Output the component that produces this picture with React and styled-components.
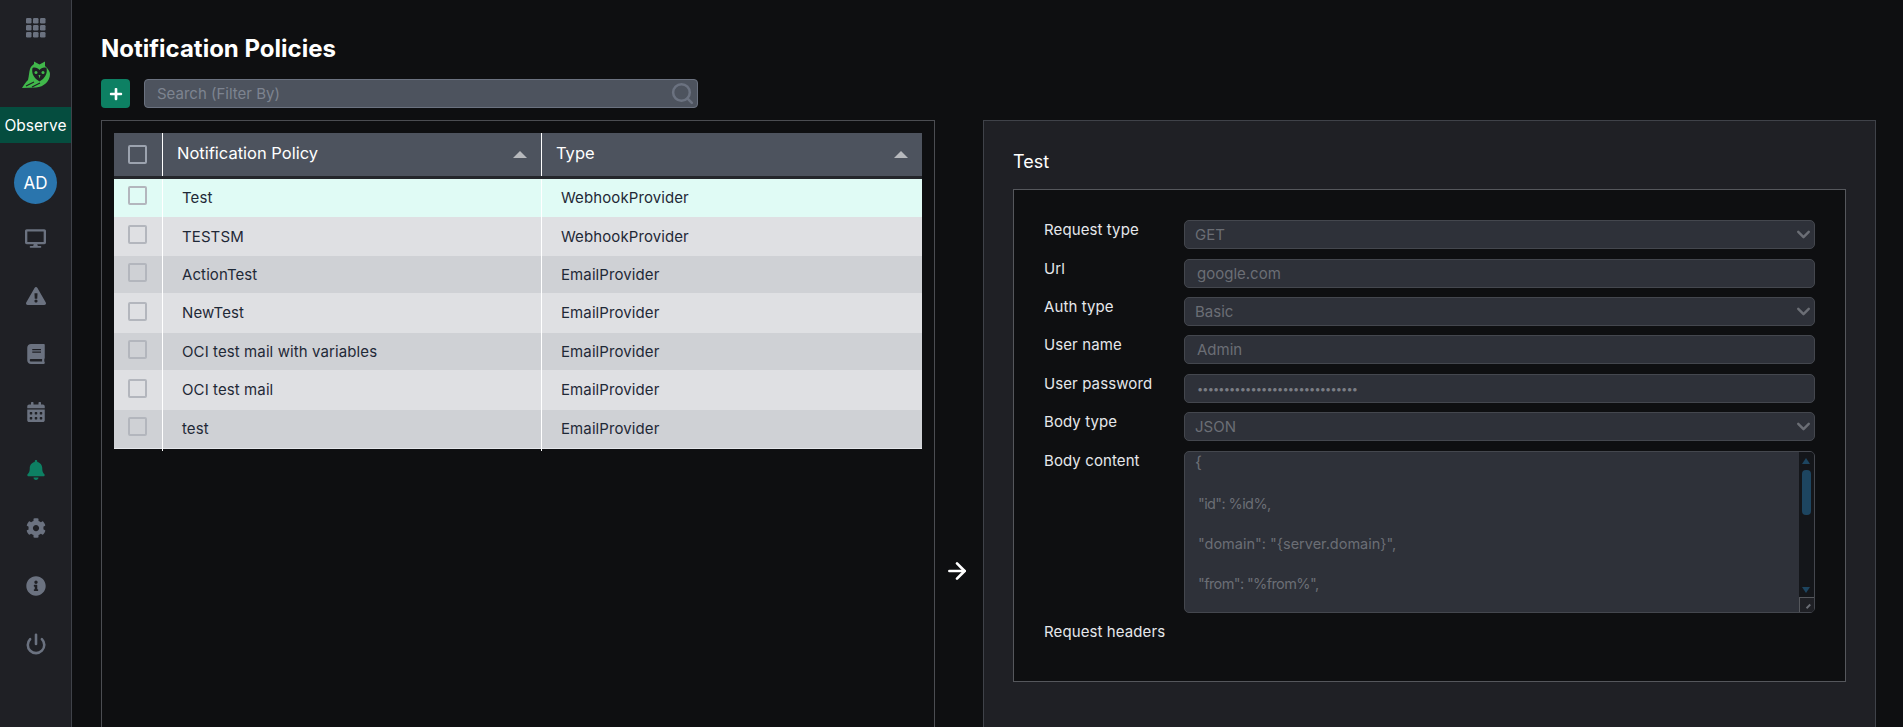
import React from "react";
import styled, { createGlobalStyle } from "styled-components";
import {
  FaDesktop,
  FaExclamationTriangle,
  FaBook,
  FaCalendarAlt,
  FaBell,
  FaCog,
  FaInfoCircle,
  FaPlus,
} from "react-icons/fa";
import { LuChevronDown, LuPower, LuSearch, LuArrowRight } from "react-icons/lu";

const GlobalStyle = createGlobalStyle`
  html, body {
    margin: 0;
    height: 100%;
    overflow: hidden;
    background: #0e0f11;
    font-family: Inter, "Liberation Sans", sans-serif;
  }
  * { box-sizing: border-box; }
`;

const Shell = styled.div`
  display: flex;
  height: 727px;
  overflow: hidden;
`;

const Sidebar = styled.nav`
  width: 72px;
  flex: none;
  background: #1f2025;
  border-right: 1px solid #3f4249;
  display: flex;
  flex-direction: column;
`;

const GridIcon = styled.svg`
  display: block;
  flex: none;
  width: 20px;
  height: 20px;
  margin: 18px 0 0 26px;
`;

const Logo = styled.svg`
  display: block;
  flex: none;
  width: 28px;
  height: 27px;
  margin: 23px 0 0 22px;
`;

const Brand = styled.div`
  margin-top: 19px;
  height: 36px;
  background: #054d3f;
  color: #fff;
  font-size: 15.5px;
  display: flex;
  align-items: center;
  justify-content: center;
`;

const Avatar = styled.div`
  width: 43px;
  height: 43px;
  margin: 18px 0 0 14px;
  border-radius: 50%;
  background: #2a75ad;
  color: #fff;
  font-size: 17px;
  display: flex;
  align-items: center;
  justify-content: center;
`;

const NavList = styled.div`
  margin-top: 5px;
  display: flex;
  flex-direction: column;
`;

const NavItem = styled.div`
  height: 58px;
  display: flex;
  align-items: center;
  justify-content: center;
  font-size: ${(p) => p.$size || 20}px;
  color: ${(p) => (p.$active ? "#0d8063" : "#6b7280")};
`;

const Main = styled.main`
  flex: 1;
  min-width: 0;
  padding: 32px 27px 0 29px;
  display: flex;
  flex-direction: column;
`;

const Title = styled.h1`
  margin: 0;
  height: 32px;
  line-height: 34px;
  font-size: 24px;
  font-weight: 700;
  color: #fff;
`;

const Toolbar = styled.div`
  margin-top: 15px;
  display: flex;
  gap: 14px;
`;

const AddButton = styled.button`
  width: 29px;
  height: 29px;
  padding: 0;
  border: none;
  border-radius: 4px;
  background: #0d8063;
  color: #fff;
  font-size: 14px;
  display: flex;
  align-items: center;
  justify-content: center;
`;

const SearchBox = styled.div`
  width: 554px;
  height: 29px;
  padding: 0 2px 0 12px;
  border: 1px solid #6b7280;
  border-radius: 4px;
  background: #4d535e;
  display: flex;
  align-items: center;
  justify-content: space-between;
  color: #7d8490;
  font-size: 15px;
`;

const Columns = styled.div`
  margin-top: 12px;
  flex: 1;
  display: flex;
  min-height: 0;
`;

const ListPanel = styled.section`
  width: 834px;
  flex: none;
  margin-bottom: -20px;
  padding: 12px;
  border: 1px solid #4b4d52;
`;

const Table = styled.div`
  width: 808px;
  display: flex;
  flex-direction: column;
  border-bottom: 1px solid #e5e7eb;
`;

const Row = styled.div`
  display: grid;
  grid-template-columns: 49px 379px 1fr;
  height: ${(p) => p.$height}px;
  background: ${(p) => p.$bg};
  color: #1f2937;
  font-size: 15px;
  letter-spacing: 0.1px;
`;

const HeadRow = styled(Row)`
  height: 46px;
  color: #fff;
  font-size: 16.5px;
  letter-spacing: 0;
  border-bottom: 3px solid #24262b;
`;

const Cell = styled.div`
  position: relative;
  padding: 0 0 ${(p) => p.$bottom || 1}px ${(p) => p.$pad || 19}px;
  border-right: ${(p) => (p.$last ? "none" : "1px solid #fff")};
  display: flex;
  align-items: center;
  justify-content: space-between;
  ${(p) =>
    p.$tail &&
    `&::after {
      content: "";
      position: absolute;
      right: -1px;
      bottom: -3px;
      width: 1px;
      height: 3px;
      background: #fff;
    }`}
`;

const BoxCell = styled(Cell)`
  padding: 0 0 0 14px;
  align-items: ${(p) => (p.$head ? "center" : "flex-start")};
  justify-content: flex-start;
`;

const Check = styled.span`
  display: block;
  width: 19px;
  height: 19px;
  margin-top: ${(p) => p.$top || 0}px;
  border: 2px solid ${(p) => (p.$head ? "#9ca3af" : "#b3b6bd")};
  border-radius: 2px;
`;

const SortArrow = styled.span`
  width: 0;
  height: 0;
  margin: 2px 14px 0 0;
  border-left: 7px solid transparent;
  border-right: 7px solid transparent;
  border-bottom: 7px solid #b7b9bd;
`;

const ArrowGap = styled.div`
  width: 48px;
  flex: none;
  display: flex;
  justify-content: center;
  padding: 438px 4px 0 0;
  color: #fff;
`;

const DetailPanel = styled.section`
  flex: 1;
  margin-bottom: -20px;
  padding: 0 29px;
  background: #1f2025;
  border: 1px solid #3f4249;
`;

const DetailTitle = styled.h2`
  margin: 0;
  height: 68px;
  padding-top: 29px;
  font-size: 18px;
  line-height: 24px;
  font-weight: 400;
  color: #fff;
`;

const FormBox = styled.div`
  height: 493px;
  padding: 30px 30px 0 30px;
  background: #0e0f11;
  border: 1px solid #55575c;
`;

const FormRow = styled.div`
  display: grid;
  grid-template-columns: 140px 1fr;
  margin-bottom: ${(p) => p.$gap ?? 9}px;
`;

const Label = styled.label`
  color: #e5e7eb;
  font-size: 15px;
  letter-spacing: 0.1px;
  line-height: 20px;
`;

const Field = styled.div`
  height: ${(p) => p.$height || 29}px;
  padding: 0 0 0 ${(p) => p.$pad || 10}px;
  background: #2e3139;
  border: 1px solid #44474e;
  border-radius: 5px;
  color: #6b6e75;
  font-size: 15px;
  display: flex;
  align-items: center;
  justify-content: space-between;
  svg {
    flex: none;
  }
`;

const Dots = styled.span`
  font-size: 11px;
  letter-spacing: -0.85px;
  color: #7a7d84;
`;

const BodyBox = styled.div`
  position: relative;
  height: 162px;
  background: #2e3139;
  border: 1px solid #44474e;
  border-radius: 5px;
  overflow: hidden;
  color: #6b6e75;
  font-size: 14.5px;
`;

const BodyLine = styled.div`
  height: 40px;
  line-height: 20px;
  padding-left: 13px;
  letter-spacing: ${(p) => (p.$tight ? "-0.6px" : "0")};
  &:first-child {
    height: 42px;
    padding-left: 10px;
    font-size: 16px;
  }
`;

const ScrollRail = styled.div`
  position: absolute;
  top: 0;
  right: 0;
  bottom: 0;
  width: 15px;
  background: #14161a;
`;

const ScrollTri = styled.span`
  position: absolute;
  left: 3px;
  width: 0;
  height: 0;
  border-left: 4.5px solid transparent;
  border-right: 4.5px solid transparent;
  ${(p) =>
    p.$down
      ? "bottom: 19px; border-top: 6px solid #1d4560;"
      : "top: 6px; border-bottom: 6px solid #1d4560;"}
`;

const ScrollThumb = styled.span`
  position: absolute;
  top: 18px;
  left: 3px;
  width: 9px;
  height: 45px;
  border-radius: 4px;
  background: #1d4560;
`;

const Resizer = styled.svg`
  position: absolute;
  right: 0;
  bottom: 0;
  width: 15px;
  height: 15px;
  background: #1f2025;
  border: 1px solid #55575c;
  border-right: none;
  border-bottom: none;
`;

const rows = [
  { name: "Test", type: "WebhookProvider", h: 38, bg: "#e0fbf5" },
  { name: "TESTSM", type: "WebhookProvider", h: 39, bg: "#dfe0e3" },
  { name: "ActionTest", type: "EmailProvider", h: 37, bg: "#cfd1d5" },
  { name: "NewTest", type: "EmailProvider", h: 40, bg: "#dfe0e3" },
  { name: "OCI test mail with variables", type: "EmailProvider", h: 37, bg: "#cfd1d5" },
  { name: "OCI test mail", type: "EmailProvider", h: 40, bg: "#dfe0e3" },
  { name: "test", type: "EmailProvider", h: 38, bg: "#cfd1d5" },
];

const navItems = [
  { icon: <FaDesktop />, size: 21, key: "desktop" },
  { icon: <FaExclamationTriangle />, key: "alerts" },
  { icon: <FaBook />, key: "book" },
  { icon: <FaCalendarAlt />, key: "calendar" },
  { icon: <FaBell />, active: true, key: "bell" },
  { icon: <FaCog />, key: "gear" },
  { icon: <FaInfoCircle />, key: "info" },
  { icon: <LuPower strokeWidth={2.8} />, size: 22, key: "power" },
];

// owl mark, no icon package has this one
function Owl() {
  return (
    <Logo viewBox="0 0 28 27">
      <path
        fill="#41b84b"
        d="M12 .5l5.500 3 5.500-3V5c3.500 3 5 6 5 8 0 7-6 13-14 13.500L0 27c2-3 3.500-6 6-8 1-4 1-8 2-11 1-3 3-4 4-5z"
      />
      <path
        fill="#1f2025"
        d="M10.500 7c2.500-1 5.500 0 7 2 1.500-2 4.500-3 7-2 1 4-.5 8-3.500 11l-3.500 2.500L14 18c-3-3-4.500-7-3.500-11z"
      />
      <circle cx="14" cy="11.500" r="1.500" fill="#41b84b" />
      <circle cx="21" cy="11.500" r="1.500" fill="#41b84b" />
      <path fill="#41b84b" d="M16.500 14h2l-1 3.500z" />
      <path stroke="#1f2025" strokeWidth="1.200" fill="none" d="M4 25l8-4 M10 26l8-4" />
    </Logo>
  );
}

function Dropdown({ value }) {
  return (
    <Field>
      {value}
      <LuChevronDown size={21} color="#6b6e75" strokeWidth={2.8} />
    </Field>
  );
}

export default function App() {
  return (
    <Shell>
      <GlobalStyle />
      <Sidebar>
        <GridIcon viewBox="0 0 20 20" fill="#6b7280">
          {[0, 7, 14].flatMap((y) =>
            [0, 7, 14].map((x) => <rect key={`${x}-${y}`} x={x} y={y} width="5.500" height="5.500" rx="1.200" />)
          )}
        </GridIcon>
        <Owl />
        <Brand>Observe</Brand>
        <Avatar>AD</Avatar>
        <NavList>
          {navItems.map((item) => (
            <NavItem key={item.key} $active={item.active} $size={item.size}>
              {item.icon}
            </NavItem>
          ))}
        </NavList>
      </Sidebar>

      <Main>
        <Title>Notification Policies</Title>
        <Toolbar>
          <AddButton>
            <FaPlus />
          </AddButton>
          <SearchBox>
            Search (Filter By)
            <LuSearch size={25} color="#6b7280" strokeWidth={2.4} />
          </SearchBox>
        </Toolbar>

        <Columns>
          <ListPanel>
            <Table>
              <HeadRow $bg="#4d535e">
                <BoxCell $head>
                  <Check $head />
                </BoxCell>
                <Cell $pad={14} $bottom={3}>
                  Notification Policy
                  <SortArrow />
                </Cell>
                <Cell $pad={14} $bottom={3} $last>
                  Type
                  <SortArrow />
                </Cell>
              </HeadRow>
              {rows.map((row, i) => (
                <Row key={row.name} $height={row.h} $bg={row.bg}>
                  <BoxCell $tail={i === rows.length - 1}>
                    <Check $top={Math.max(7, row.h - 31)} />
                  </BoxCell>
                  <Cell $tail={i === rows.length - 1}>{row.name}</Cell>
                  <Cell $last>{row.type}</Cell>
                </Row>
              ))}
            </Table>
          </ListPanel>

          <ArrowGap>
            <LuArrowRight size={26} strokeWidth={2.5} />
          </ArrowGap>

          <DetailPanel>
            <DetailTitle>Test</DetailTitle>
            <FormBox>
              <FormRow $gap={10}>
                <Label>Request type</Label>
                <Dropdown value="GET" />
              </FormRow>
              <FormRow>
                <Label>Url</Label>
                <Field $pad={12}>google.com</Field>
              </FormRow>
              <FormRow>
                <Label>Auth type</Label>
                <Dropdown value="Basic" />
              </FormRow>
              <FormRow $gap={10}>
                <Label>User name</Label>
                <Field $pad={12}>Admin</Field>
              </FormRow>
              <FormRow>
                <Label>User password</Label>
                <Field $pad={12}>
                  <Dots>••••••••••••••••••••••••••••••</Dots>
                </Field>
              </FormRow>
              <FormRow $gap={10}>
                <Label>Body type</Label>
                <Dropdown value="JSON" />
              </FormRow>
              <FormRow>
                <Label>Body content</Label>
                <BodyBox>
                  <BodyLine>{"{"}</BodyLine>
                  <BodyLine $tight>"id": %id%,</BodyLine>
                  <BodyLine>"domain": "{"{server.domain}"}",</BodyLine>
                  <BodyLine $tight>"from": "%from%",</BodyLine>
                  <ScrollRail>
                    <ScrollTri />
                    <ScrollThumb />
                    <ScrollTri $down />
                  </ScrollRail>
                  <Resizer viewBox="0 0 15 15">
                    <path d="M7 11l4-4" stroke="#6b6e75" strokeWidth="2" />
                  </Resizer>
                </BodyBox>
              </FormRow>
              <FormRow $gap={0}>
                <Label>Request headers</Label>
              </FormRow>
            </FormBox>
          </DetailPanel>
        </Columns>
      </Main>
    </Shell>
  );
}
